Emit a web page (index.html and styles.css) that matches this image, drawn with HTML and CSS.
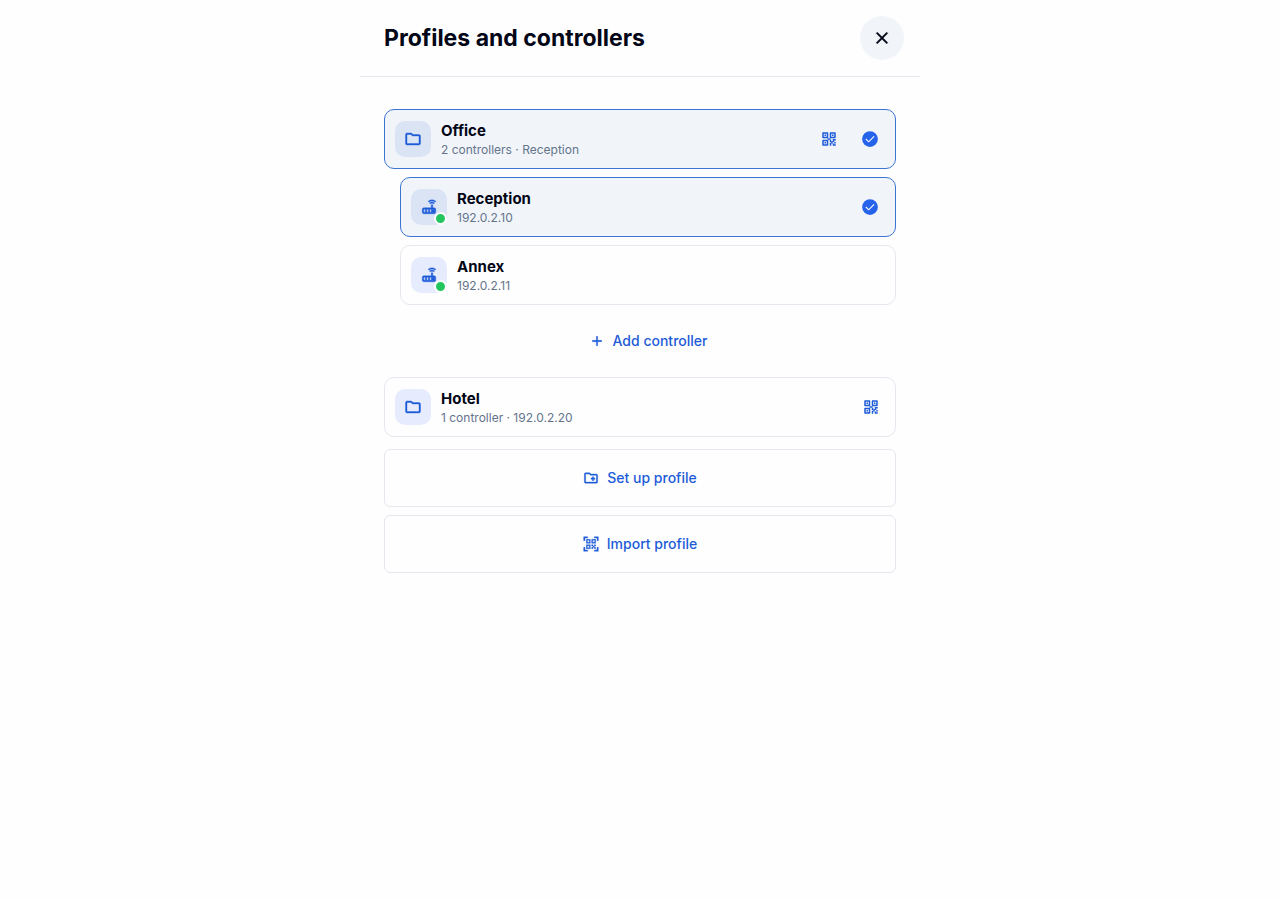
FILE: index.html
```html
<!DOCTYPE html>
<html lang="en">
<head>
    <meta charset="UTF-8">
    <meta name="viewport" content="width=device-width, initial-scale=1">
    <title>Profiles and controllers</title>
    <link rel="stylesheet" href="styles.css">
</head>
<body>
    <!-- Shared icons -->
    <svg width="0" height="0" class="sprite" aria-hidden="true">
        <symbol id="icon-folder" viewBox="0 0 24 24">
            <path d="M4 20q-.8 0-1.4-.6T2 18V6q0-.8.6-1.4T4 4h6l2 2h8q.8 0 1.4.6T22 8v10q0 .8-.6 1.4T20 20zm0-2h16V8h-8.8l-2-2H4z"/>
        </symbol>
        <symbol id="icon-folder-add" viewBox="0 0 24 24">
            <path d="M4 20q-.8 0-1.4-.6T2 18V6q0-.8.6-1.4T4 4h6l2 2h8q.8 0 1.4.6T22 8v10q0 .8-.6 1.4T20 20zm0-2h16V8h-8.8l-2-2H4z"/>
            <path d="M14 16h2v-2h2v-2h-2v-2h-2v2h-2v2h2z"/>
        </symbol>
        <symbol id="icon-router" viewBox="0 0 24 24">
            <path fill-rule="evenodd" d="M5 21q-.8 0-1.4-.6T3 19v-4q0-.8.6-1.4T5 13h10V9h2v4h2q.8 0 1.4.6T21 15v4q0 .8-.6 1.4T19 21zm0-2h14v-4H5z"/>
            <path d="M7 15h2v4H7zM11 15h2v4h-2zM15 15h4v4h-4z"/>
            <path d="M13.8 7.8 12.6 6.600Q14.1 5.2 16 5.200t3.4 1.400l-1.2 1.200Q17.2 6.900 16 6.900t-2.200.9zM12 5.500l-1.200-1.200Q13 2.300 16 2.300t5.200 2l-1.200 1.200Q18.200 4 16 4t-4 1.500z"/>
        </symbol>
        <symbol id="icon-qr" viewBox="0 0 24 24">
            <path fill-rule="evenodd" d="M3 4q0-1 1-1h6q1 0 1 1v6q0 1-1 1H4q-1 0-1-1zm2 1v4h4V5zM13 4q0-1 1-1h6q1 0 1 1v6q0 1-1 1h-6q-1 0-1-1zm2 1v4h4V5zM3 14q0-1 1-1h6q1 0 1 1v6q0 1-1 1H4q-1 0-1-1zm2 1v4h4v-4z"/>
            <path d="M6 6h2v2H6zM16 6h2v2h-2zM6 16h2v2H6zM10 11h4v2h-4zM13 13h2v3h-2zM17 12h4v2h-2v2h-2v2h-2v3h-2v-4h2v-2h2zM19 16h2v2h-2zM17 18h2v1h2v2h-4z"/>
        </symbol>
        <symbol id="icon-scan" viewBox="0 0 24 24">
            <path d="M1 7V1h6v2H3v4zM1 23v-6h2v4h4v2zM17 23v-2h4v-4h2v6zM21 7V3h-4V1h6v6z"/>
            <path fill-rule="evenodd" d="M5 5h6v6H5zm1.500 1.500v3h3v-3zM13 5h6v6h-6zm1.500 1.500v3h3v-3zM5 13h6v6H5zm1.500 1.500v3h3v-3zM13 13h2v2h-2zM15 15h2v2h-2zM17 13h2v2h-2zM13 17h2v2h-2zM17 17h2v2h-2z"/>
        </symbol>
        <symbol id="icon-plus" viewBox="0 0 24 24">
            <path d="M11 19v-6H5v-2h6V5h2v6h6v2h-6v6z"/>
        </symbol>
        <symbol id="icon-close" viewBox="0 0 24 24">
            <path d="M6.4 19 5 17.600l5.600-5.600L5 6.400 6.400 5l5.600 5.600L17.600 5 19 6.400 13.400 12l5.600 5.600-1.400 1.400-5.600-5.600z"/>
        </symbol>
        <symbol id="icon-check" viewBox="0 0 24 24">
            <circle cx="12" cy="12" r="10.5"/>
            <path class="tick" d="m6.500 12 3.700 3.700L17.500 8.400"/>
        </symbol>
    </svg>

    <div class="panel">
        <header class="panel-header">
            <h1>Profiles and controllers</h1>
            <button class="close" type="button" aria-label="Close">
                <svg class="icon-lg"><use href="#icon-close"/></svg>
            </button>
        </header>

        <main>
            <div class="card selected">
                <button class="card-main" type="button">
                    <span class="tile"><svg class="icon"><use href="#icon-folder"/></svg></span>
                    <span class="text">
                        <span class="name">Office</span>
                        <span class="detail">2 controllers · Reception</span>
                    </span>
                </button>
                <button class="share" type="button" aria-label="Share Office">
                    <svg class="icon"><use href="#icon-qr"/></svg>
                </button>
                <span class="check"><svg class="icon"><use href="#icon-check"/></svg></span>
            </div>

            <div class="controllers">
                <div class="card selected">
                    <button class="card-main" type="button">
                        <span class="tile online"><svg class="icon"><use href="#icon-router"/></svg></span>
                        <span class="text">
                            <span class="name">Reception</span>
                            <span class="detail">192.0.2.10</span>
                        </span>
                    </button>
                    <span class="check"><svg class="icon"><use href="#icon-check"/></svg></span>
                </div>
                <div class="card">
                    <button class="card-main" type="button">
                        <span class="tile online"><svg class="icon"><use href="#icon-router"/></svg></span>
                        <span class="text">
                            <span class="name">Annex</span>
                            <span class="detail">192.0.2.11</span>
                        </span>
                    </button>
                </div>
                <button class="action" type="button">
                    <svg class="icon-sm"><use href="#icon-plus"/></svg>
                    Add controller
                </button>
            </div>

            <div class="card">
                <button class="card-main" type="button">
                    <span class="tile"><svg class="icon"><use href="#icon-folder"/></svg></span>
                    <span class="text">
                        <span class="name">Hotel</span>
                        <span class="detail">1 controller · 192.0.2.20</span>
                    </span>
                </button>
                <button class="share" type="button" aria-label="Share Hotel">
                    <svg class="icon"><use href="#icon-qr"/></svg>
                </button>
            </div>

            <div class="profile-actions">
                <button class="action outlined" type="button">
                    <svg class="icon-sm"><use href="#icon-folder-add"/></svg>
                    Set up profile
                </button>
                <button class="action outlined" type="button">
                    <svg class="icon-sm"><use href="#icon-scan"/></svg>
                    Import profile
                </button>
            </div>
        </main>
    </div>
</body>
</html>
```
FILE: styles.css
```css
*,
*::after {
    box-sizing: border-box;
}

body {
    margin: 0;
    background: #fefefe;
    color: #020617;
    font-family: Inter, "Liberation Sans", sans-serif;
}

button {
    padding: 0;
    border: none;
    background: none;
    color: inherit;
    font: inherit;
    cursor: pointer;
}

svg {
    display: block;
    flex: none;
    fill: currentColor;
}

.sprite {
    position: absolute;
}

.icon {
    width: 18px;
    height: 18px;
}

.icon-sm {
    width: 16px;
    height: 16px;
}

.icon-lg {
    width: 20px;
    height: 20px;
}

.tile svg,
.action svg,
.close svg {
    stroke: currentColor;
    stroke-width: 0.5;
}

.panel {
    max-width: 560px;
    margin: 0 auto;
}

.panel-header {
    display: flex;
    align-items: center;
    justify-content: space-between;
    padding: 16px 16px 16px 24px;
    border-bottom: 1px solid #e5e8ee;
}

h1 {
    margin: 0;
    font-size: 23px;
    line-height: 28px;
    font-weight: 700;
}

.close {
    display: grid;
    place-items: center;
    width: 44px;
    height: 44px;
    border-radius: 50%;
    background: #f1f5f9;
}

main {
    display: flex;
    flex-direction: column;
    gap: 8px;
    padding: 32px 24px;
}

.controllers {
    display: flex;
    flex-direction: column;
    gap: 8px;
    padding-left: 16px;
}

.card {
    display: flex;
    align-items: center;
    gap: 12px;
    padding: 0 10px;
    border: 1px solid #e5e8ee;
    border-radius: 10px;
}

.card.selected {
    border-color: #3b74d3;
    background: #f1f5fa;
}

.card-main {
    display: flex;
    flex: 1;
    align-items: center;
    gap: 10px;
    padding: 10px 0;
    text-align: left;
}

.tile {
    position: relative;
    display: grid;
    place-items: center;
    width: 36px;
    height: 36px;
    border-radius: 10px;
    background: #e6ecfd;
    color: #1d5bd8;
}

.selected .tile {
    background: #dae4f5;
}

/* Status dot on the corner of the tile */
.online::after {
    content: "";
    position: absolute;
    right: 0;
    bottom: 0;
    width: 13px;
    height: 13px;
    border: 2px solid #fefefe;
    border-radius: 50%;
    background: #22c55e;
}

.text {
    display: flex;
    flex-direction: column;
}

.name {
    font-size: 15px;
    line-height: 22px;
    font-weight: 700;
}

.detail {
    color: #64748b;
    font-size: 12px;
    line-height: 16px;
}

.share {
    display: grid;
    place-items: center;
    width: 28px;
    height: 28px;
    color: #1d5bd8;
}

.check {
    display: grid;
    place-items: center;
    width: 30px;
    color: #2563eb;
}

.tick {
    fill: none;
    stroke: #fff;
    stroke-width: 1.5;
}

.action {
    display: flex;
    align-items: center;
    justify-content: center;
    gap: 8px;
    width: 100%;
    min-height: 56px;
    color: #1d5bd8;
    font-size: 14px;
    line-height: 20px;
    font-weight: 500;
}

.profile-actions {
    display: flex;
    flex-direction: column;
    gap: 8px;
    padding-top: 4px;
}

.outlined {
    min-height: 58px;
    border: 1px solid #e5e8ee;
    border-radius: 6px;
}
```
